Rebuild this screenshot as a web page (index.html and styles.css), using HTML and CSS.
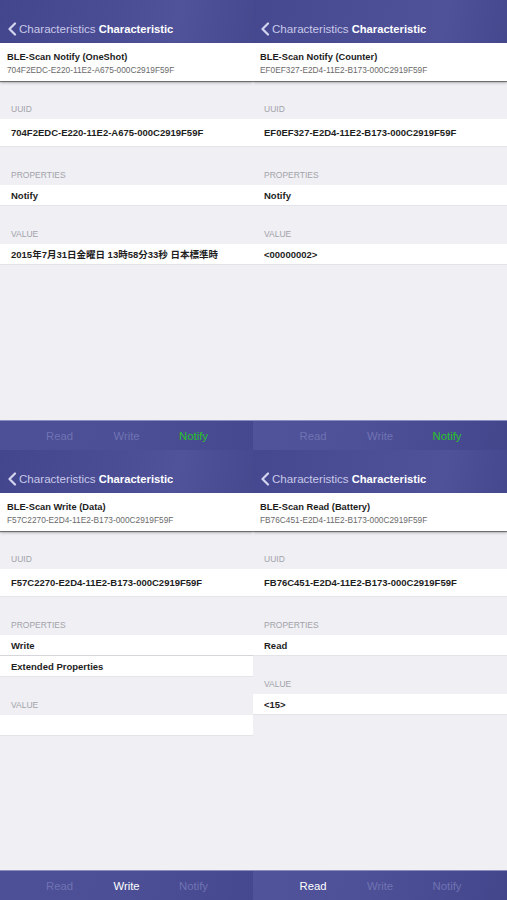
FILE: index.html
```html
<!DOCTYPE html>
<html>
<head>
<meta charset="utf-8">
<link rel="stylesheet" href="styles.css">
</head>
<body>
<div class="grid">

  <section class="panel">
    <div class="nav">
      <svg class="chev" width="10" height="14" viewBox="0 0 10 14"><path d="M8 1.5 L2.5 7 L8 12.5" fill="none" stroke="#d4d5f0" stroke-width="2.2" stroke-linecap="round" stroke-linejoin="round"/></svg>
      <span class="back">Characteristics</span><span class="title">Characteristic</span>
    </div>
    <div class="head">
      <div class="h-name">BLE-Scan Notify (OneShot)</div>
      <div class="h-uuid">704F2EDC-E220-11E2-A675-000C2919F59F</div>
    </div>
    <div class="content">
      <div class="label">UUID</div>
      <div class="row tall">704F2EDC-E220-11E2-A675-000C2919F59F</div>
      <div class="label">PROPERTIES</div>
      <div class="row">Notify</div>
      <div class="label">VALUE</div>
      <div class="row cjk">2015年7月31日金曜日 13時58分33秒 日本標準時</div>
    </div>
    <div class="tabs">
      <span class="tab">Read</span><span class="tab">Write</span><span class="tab green">Notify</span>
    </div>
  </section>

  <section class="panel">
    <div class="nav alt">
      <svg class="chev" width="10" height="14" viewBox="0 0 10 14"><path d="M8 1.5 L2.5 7 L8 12.5" fill="none" stroke="#d4d5f0" stroke-width="2.2" stroke-linecap="round" stroke-linejoin="round"/></svg>
      <span class="back">Characteristics</span><span class="title">Characteristic</span>
    </div>
    <div class="head">
      <div class="h-name">BLE-Scan Notify (Counter)</div>
      <div class="h-uuid">EF0EF327-E2D4-11E2-B173-000C2919F59F</div>
    </div>
    <div class="content">
      <div class="label">UUID</div>
      <div class="row tall">EF0EF327-E2D4-11E2-B173-000C2919F59F</div>
      <div class="label">PROPERTIES</div>
      <div class="row">Notify</div>
      <div class="label">VALUE</div>
      <div class="row">&lt;00000002&gt;</div>
    </div>
    <div class="tabs alt">
      <span class="tab">Read</span><span class="tab">Write</span><span class="tab green">Notify</span>
    </div>
  </section>

  <section class="panel">
    <div class="nav">
      <svg class="chev" width="10" height="14" viewBox="0 0 10 14"><path d="M8 1.5 L2.5 7 L8 12.5" fill="none" stroke="#d4d5f0" stroke-width="2.2" stroke-linecap="round" stroke-linejoin="round"/></svg>
      <span class="back">Characteristics</span><span class="title">Characteristic</span>
    </div>
    <div class="head">
      <div class="h-name">BLE-Scan Write (Data)</div>
      <div class="h-uuid">F57C2270-E2D4-11E2-B173-000C2919F59F</div>
    </div>
    <div class="content">
      <div class="label">UUID</div>
      <div class="row tall">F57C2270-E2D4-11E2-B173-000C2919F59F</div>
      <div class="label">PROPERTIES</div>
      <div class="row sep">Write</div>
      <div class="row">Extended Properties</div>
      <div class="label">VALUE</div>
      <div class="row"></div>
    </div>
    <div class="tabs">
      <span class="tab">Read</span><span class="tab active">Write</span><span class="tab">Notify</span>
    </div>
  </section>

  <section class="panel">
    <div class="nav alt">
      <svg class="chev" width="10" height="14" viewBox="0 0 10 14"><path d="M8 1.5 L2.5 7 L8 12.5" fill="none" stroke="#d4d5f0" stroke-width="2.2" stroke-linecap="round" stroke-linejoin="round"/></svg>
      <span class="back">Characteristics</span><span class="title">Characteristic</span>
    </div>
    <div class="head">
      <div class="h-name">BLE-Scan Read (Battery)</div>
      <div class="h-uuid">FB76C451-E2D4-11E2-B173-000C2919F59F</div>
    </div>
    <div class="content">
      <div class="label">UUID</div>
      <div class="row tall">FB76C451-E2D4-11E2-B173-000C2919F59F</div>
      <div class="label">PROPERTIES</div>
      <div class="row">Read</div>
      <div class="label">VALUE</div>
      <div class="row">&lt;15&gt;</div>
    </div>
    <div class="tabs alt">
      <span class="tab active">Read</span><span class="tab">Write</span><span class="tab">Notify</span>
    </div>
  </section>

</div>
</body>
</html>
```

FILE: styles.css
```css
* { box-sizing: border-box; }
html, body { margin: 0; padding: 0; }
body {
  width: 507px;
  height: 900px;
  overflow: hidden;
  background: #efeff4;
  font-family: "Liberation Sans", Arial, "Noto Sans CJK JP", sans-serif;
}
.grid {
  display: grid;
  grid-template-columns: 253px 254px;
  grid-template-rows: 450px 450px;
}
.panel {
  display: flex;
  flex-direction: column;
  background: #efeff4;
  overflow: hidden;
}
.nav {
  height: 43px;
  flex: none;
  display: flex;
  align-items: center;
  padding: 14px 0 0 7px;
  background: linear-gradient(100deg, #43458d 0%, #4a4c94 45%, #50529a 70%, #47498f 100%);
  white-space: nowrap;
}
.nav.alt {
  background: linear-gradient(100deg, #45478f 0%, #4c4e96 50%, #4f5199 75%, #46488e 100%);
}
.chev { flex: none; margin-right: 2px; }
.back {
  font-size: 11.6px;
  color: #c9cae9;
  margin-right: 3px;
}
.title {
  font-size: 11.2px;
  font-weight: bold;
  color: #ffffff;
}
.head {
  height: 38px;
  flex: none;
  background: #ffffff;
  padding: 8px 0 0 7px;
  box-shadow: 0 1px 1px rgba(0,0,0,0.45), 0 2px 3px rgba(0,0,0,0.2);
  position: relative;
  z-index: 1;
}
.h-name {
  font-size: 9.3px;
  font-weight: bold;
  color: #1c1c1c;
  line-height: 13px;
}
.h-uuid {
  font-size: 8.3px;
  color: #6a6a6a;
  line-height: 13px;
}
.content {
  flex: 1;
  display: flex;
  flex-direction: column;
}
.label {
  height: 38px;
  padding: 23px 0 0 11px;
  font-size: 8.5px;
  line-height: 10px;
  color: #a3a3a9;
}
.row {
  height: 21px;
  background: #ffffff;
  padding-left: 11px;
  display: flex;
  align-items: center;
  font-size: 9.5px;
  font-weight: bold;
  color: #1e1e1e;
  border-bottom: 1px solid #e4e4e8;
  white-space: nowrap;
}
.row.tall { height: 28px; }
.row.sep { border-bottom: 1px solid #d6d6da; }
.tabs {
  height: 30px;
  flex: none;
  display: flex;
  justify-content: center;
  align-items: center;
  background: linear-gradient(100deg, #4d5097 0%, #4c4f96 50%, #46488f 100%);
  border-top: 1px solid #8c8ebf;
}
.tabs.alt {
  background: linear-gradient(100deg, #505399 0%, #4e5198 40%, #44468c 100%);
}
.tab {
  width: 67px;
  text-align: center;
  font-size: 11.3px;
  color: #7073b3;
}
.tab.active { color: #ffffff; }
.tab.green { color: #27c228; }
```
